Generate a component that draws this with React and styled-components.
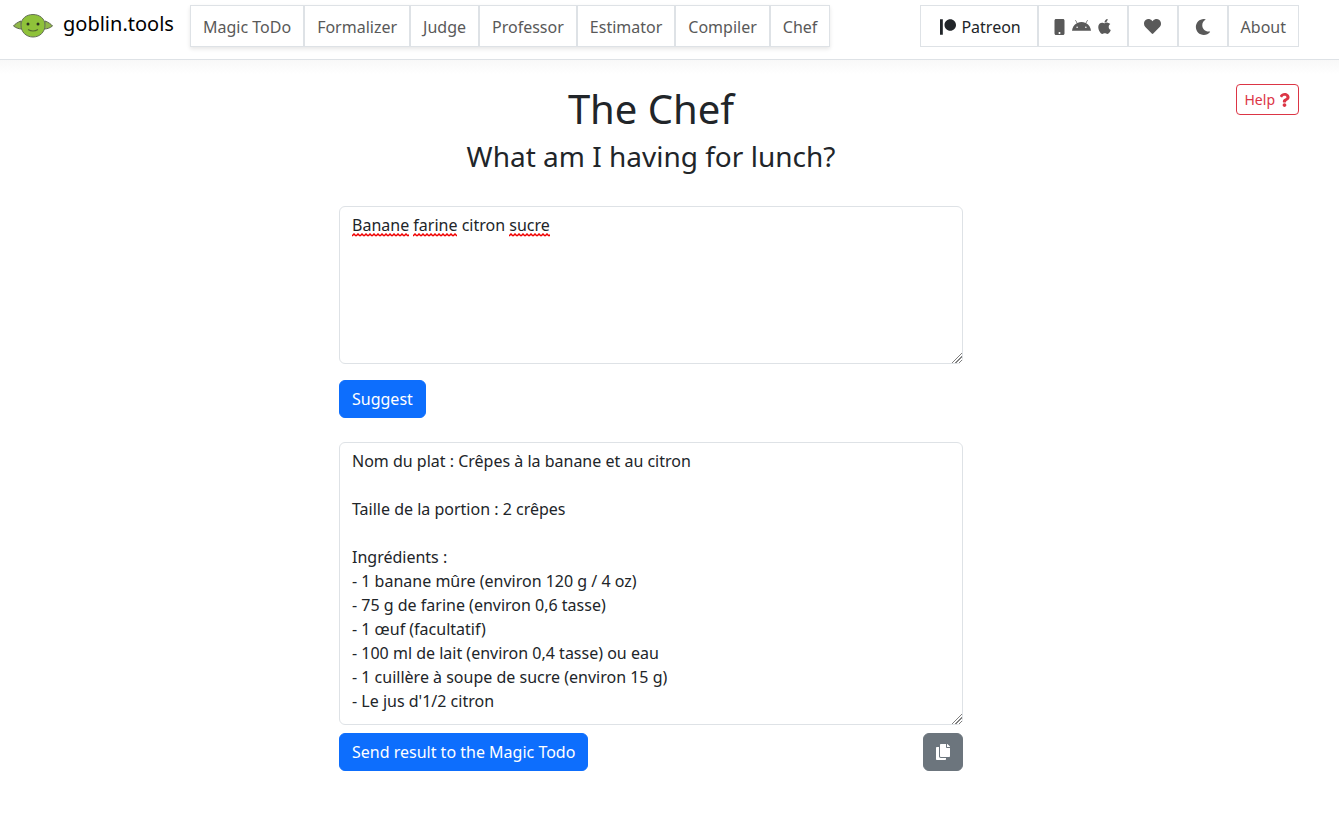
import React from "react";
import styled, { createGlobalStyle } from "styled-components";
import { FaPatreon, FaMobile, FaAndroid, FaApple, FaHeart, FaMoon, FaQuestion, FaCopy } from "react-icons/fa";

const GlobalStyle = createGlobalStyle`
  * { box-sizing: border-box; }
  html, body { margin: 0; padding: 0; background: #fff; }
  body {
    font-family: "Noto Sans", sans-serif;
    font-size: 16px;
    line-height: 24px;
    color: #212529;
  }
`;

const Navbar = styled.nav`
  display: flex;
  align-items: flex-start;
  height: 60px;
  padding: 5px 40px 0 13px;
  border-bottom: 1px solid #dee2e6;
`;

const Brand = styled.a`
  display: flex;
  align-items: center;
  gap: 10px;
  height: 38px;
  width: 177px;
  font-size: 20px;
  color: #000;
`;

const LogoSvg = styled.svg`
  width: 40px;
  height: 24px;
  margin-top: 4px;
`;

const NavGroup = styled.div`
  display: flex;
  height: 42px;
  box-shadow: ${(p) => (p.$raised ? "0 2px 4px rgba(0, 0, 0, 0.1)" : "none")};
  margin-left: ${(p) => (p.$push ? "auto" : "0")};
`;

const NavItem = styled.a`
  display: flex;
  align-items: center;
  justify-content: center;
  gap: ${(p) => p.$gap || 0}px;
  width: ${(p) => (p.$width ? `${p.$width}px` : "auto")};
  padding: ${(p) => (p.$width ? "1px 0 0" : "1px 12px 0")};
  padding-left: ${(p) => (p.$shift ? `${p.$shift}px` : undefined)};
  border: 1px solid #dee2e6;
  background: #fff;
  color: ${(p) => (p.$dark ? "#212529" : "#595959")};
`;

const MobileIcon = styled(FaMobile)`
  width: 11px;
  height: 16px;
`;

const AndroidIcon = styled(FaAndroid)`
  width: 19px;
  height: 17px;
`;

const AppleIcon = styled(FaApple)`
  width: 13px;
  height: 17px;
`;

const HelpIcon = styled(FaQuestion)`
  width: 11px;
  height: 14px;
`;

const CopyIcon = styled(FaCopy)`
  width: 14px;
  height: 16px;
`;

const Banner = styled.div`
  height: 24px;
  margin-bottom: -24px;
  background: linear-gradient(#f8f8f8, #fff 60%);
`;

const Main = styled.main`
  position: relative;
  display: flex;
  flex-direction: column;
  align-items: center;
  padding: 25px 40px 0 3px;
`;

const HelpButton = styled.button`
  position: absolute;
  top: 24px;
  right: 40px;
  display: flex;
  align-items: center;
  gap: 4px;
  height: 31px;
  padding: 0 8px;
  border: 1px solid #dc3545;
  border-radius: 4px;
  background: #fff;
  color: #dc3545;
  font: 14px/21px "Noto Sans", sans-serif;
`;

const Title = styled.h1`
  margin: 0;
  font-size: 40px;
  font-weight: 400;
  line-height: 48px;
`;

const Subtitle = styled.h3`
  margin: 6px 0 0;
  font-size: 28px;
  font-weight: 400;
  line-height: 34px;
`;

const Column = styled.div`
  display: flex;
  flex-direction: column;
  width: 624px;
  margin-top: 33px;
`;

const Frame = styled.div`
  position: relative;
  margin-top: ${(p) => p.$top || 0}px;
  &::after {
    content: "";
    position: absolute;
    right: 1px;
    bottom: 1px;
    width: 12px;
    height: 12px;
    pointer-events: none;
    clip-path: polygon(100% 0, 100% 100%, 0 100%);
    background: repeating-linear-gradient(135deg, #808080 0 1px, #fff 1px 2.4px);
  }
`;

const InputBox = styled.div`
  height: 158px;
  padding: 6px 12px;
  border: 1px solid #dee2e6;
  border-radius: 6px;
  background: #fff;
  overflow: hidden;
  white-space: pre-wrap;
`;

const Misspelled = styled.span`
  padding-bottom: 1px;
  background-image: url("data:image/svg+xml,%3Csvg xmlns='http://www.w3.org/2000/svg' width='4' height='4'%3E%3Cpath d='M0 3 L2 1 L4 3' fill='none' stroke='%23f00000' stroke-width='1.5'/%3E%3C/svg%3E");
  background-size: 4px 4px;
  background-position: 0 100%;
  background-repeat: repeat-x;
`;

const ResultBox = styled.textarea`
  display: block;
  width: 100%;
  height: 283px;
  padding: 6px 12px;
  border: 1px solid #dee2e6;
  border-radius: 6px;
  background: #fff;
  color: #212529;
  font: 16px/24px "Noto Sans", sans-serif;
  overflow: hidden;
  resize: none;
  outline: none;
`;

const Actions = styled.div`
  display: flex;
  justify-content: space-between;
  margin-top: ${(p) => p.$top}px;
`;

const Button = styled.button`
  display: flex;
  align-items: center;
  justify-content: center;
  height: 38px;
  padding: 0 12px;
  border: 1px solid ${(p) => (p.$secondary ? "#6c757d" : "#0d6efd")};
  border-radius: 6px;
  background: ${(p) => (p.$secondary ? "#6c757d" : "#0d6efd")};
  color: #fff;
  font: 16px/24px "Noto Sans", sans-serif;
`;

const GoblinLogo = () => (
  <LogoSvg viewBox="0 0 40 24">
    <path d="M8 7 C5 8 2 10 0.5 12 C3 14 6 15 9 15 Z" fill="#90b848" stroke="#5d6650" strokeWidth="1" />
    <path d="M32 7 C35 8 38 10 39.5 12 C37 14 34 15 31 15 Z" fill="#90b848" stroke="#5d6650" strokeWidth="1" />
    <path d="M20 0.5 C27 0.5 32 5 32 11 C32 18 27 23 20 23 C13 23 8 18 8 11 C8 5 13 0.5 20 0.5 Z" fill="#8fc23a" stroke="#66705a" strokeWidth="1" />
    <circle cx="15" cy="10" r="1.5" fill="#2c3320" />
    <circle cx="25" cy="10" r="1.5" fill="#2c3320" />
    <path d="M15 15.5 Q20 18.5 25 15.5" fill="none" stroke="#566a32" strokeWidth="1.1" />
  </LogoSvg>
);

const result = `Nom du plat : Crêpes à la banane et au citron

Taille de la portion : 2 crêpes

Ingrédients :
- 1 banane mûre (environ 120 g / 4 oz)
- 75 g de farine (environ 0,6 tasse)
- 1 œuf (facultatif)
- 100 ml de lait (environ 0,4 tasse) ou eau
- 1 cuillère à soupe de sucre (environ 15 g)
- Le jus d'1/2 citron`;

const tools = ["Magic ToDo", "Formalizer", "Judge", "Professor", "Estimator", "Compiler", "Chef"];

export default function App() {
  return (
    <>
      <GlobalStyle />
      <Navbar>
        <Brand>
          <GoblinLogo />
          goblin.tools
        </Brand>
        <NavGroup $raised>
          {tools.map((tool) => (
            <NavItem key={tool}>{tool}</NavItem>
          ))}
        </NavGroup>
        <NavGroup $push>
          <NavItem $width={118} $dark $gap={5} $shift={4}>
            <FaPatreon size={16} />
            Patreon
          </NavItem>
          <NavItem $width={90} $gap={7}>
            <MobileIcon />
            <AndroidIcon />
            <AppleIcon />
          </NavItem>
          <NavItem $width={50}>
            <FaHeart size={17} />
          </NavItem>
          <NavItem $width={50}>
            <FaMoon size={16} />
          </NavItem>
          <NavItem>About</NavItem>
        </NavGroup>
      </Navbar>
      <Banner />
      <Main>
        <HelpButton>
          Help
          <HelpIcon />
        </HelpButton>
        <Title>The Chef</Title>
        <Subtitle>What am I having for lunch?</Subtitle>
        <Column>
          <Frame>
            <InputBox>
              <Misspelled>Banane</Misspelled> <Misspelled>farine</Misspelled> citron <Misspelled>sucre</Misspelled>
            </InputBox>
          </Frame>
          <Actions $top={16}>
            <Button>Suggest</Button>
          </Actions>
          <Frame $top={24}>
            <ResultBox readOnly spellCheck={false} value={result} />
          </Frame>
          <Actions $top={8}>
            <Button>Send result to the Magic Todo</Button>
            <Button $secondary>
              <CopyIcon />
            </Button>
          </Actions>
        </Column>
      </Main>
    </>
  );
}
